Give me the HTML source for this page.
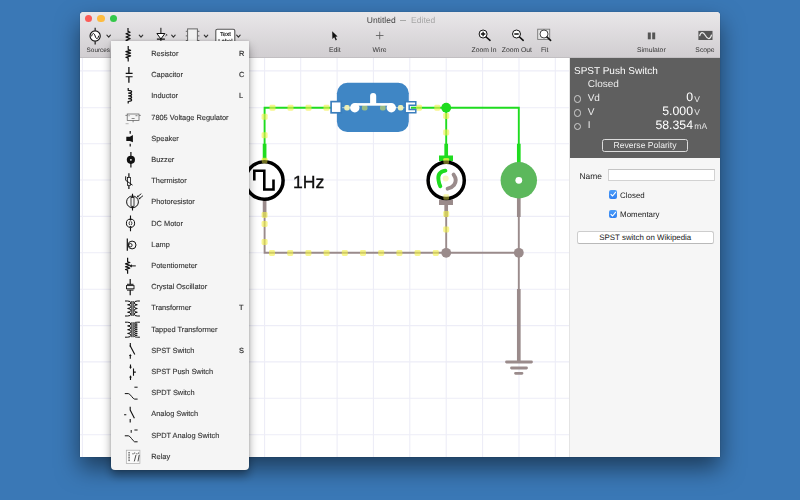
<!DOCTYPE html>
<html>
<head>
<meta charset="utf-8">
<style>
*{box-sizing:border-box;margin:0;padding:0;text-rendering:geometricPrecision}
html,body{width:800px;height:500px;overflow:hidden}
body{position:relative;background:#3a78b6;font-family:"Liberation Sans",sans-serif;color:#333}
#root{position:absolute;left:0;top:0;width:800px;height:500px;filter:blur(.3px)}
.abs{position:absolute}
#win{position:absolute;left:80px;top:12px;width:640px;height:445px;border-radius:3.5px 3.5px 0 0;background:#fff;box-shadow:0 11px 23px rgba(0,0,0,.5),0 0 1px rgba(0,0,0,.5);overflow:hidden}
#tb{position:absolute;left:0;top:0;width:640px;height:45.6px;background:linear-gradient(#e9e7e9,#d1ced1);border-bottom:1px solid #c2bfc2}
.tl{position:absolute;top:3.1px;width:7.4px;height:7.4px;border-radius:50%}
#title{position:absolute;left:286.8px;top:2.7px;font-size:8.5px;color:#444;line-height:10px;white-space:nowrap;display:flex;align-items:center}
#title b{font-weight:normal}
#title i{display:block;width:6.2px;height:.8px;background:#a8a8a8;margin:0.6px 4.7px 0 4.6px}
#title span{color:#a6a6a6}
.lbl{position:absolute;top:34.6px;font-size:6.8px;line-height:8px;color:#333;transform:translateX(-50%);white-space:nowrap}
#canvas{position:absolute;left:0;top:45.6px;width:490px;height:399.4px;background:#fff;overflow:hidden}
#side{position:absolute;left:490.3px;top:46px;width:150px;height:399px;background:#f6f6f6;box-shadow:-1px 0 0 #e4e4e4}
#dark{position:absolute;left:0;top:0;width:150px;height:100px;background:#5f5f5f;color:#fff}
#menu{position:absolute;left:111.2px;top:40.9px;width:137.6px;height:428.9px;background:#f5f5f5;border-radius:0 0 4px 4px;box-shadow:0 6px 10px rgba(0,0,0,.36),0 0 3px rgba(0,0,0,.18)}
.mi{position:absolute;left:40.1px;font-size:7.4px;line-height:10px;color:#333;white-space:nowrap;-webkit-text-stroke:.12px #333}
.mk{position:absolute;left:127.8px;font-size:7.4px;line-height:10px;color:#333;-webkit-text-stroke:.2px #333}
.rad{position:absolute;left:3.4px;width:7.6px;height:7.6px;border:1px solid #d0d0d0;border-radius:50%}
.val{position:absolute;right:27.3px;font-size:12.3px;line-height:14px;color:#fff;text-align:right;white-space:nowrap}
.unit{position:absolute;left:124px;font-size:8.5px;line-height:10px;color:#e4e4e4}
.cb{position:absolute;left:38.5px;width:8.4px;height:8.4px;border-radius:2px;background:linear-gradient(#4d9df8,#2f7ff0)}
.cb svg{position:absolute;left:0;top:0}
</style>
</head>
<body>
<div id="root">
<div id="win">
  <div id="tb">
    <div class="tl" style="left:5.1px;background:#fc5b57"></div>
    <div class="tl" style="left:17.4px;background:#fdbc40"></div>
    <div class="tl" style="left:29.7px;background:#34c84a"></div>
    <div id="title"><b>Untitled</b><i></i><span>Edited</span></div>
    <div class="lbl" style="left:18.3px;font-size:6.4px">Sources</div>
    <div class="lbl" style="left:254.8px">Edit</div>
    <div class="lbl" style="left:299.6px">Wire</div>
    <div class="lbl" style="left:404px">Zoom In</div>
    <div class="lbl" style="left:436.9px">Zoom Out</div>
    <div class="lbl" style="left:464.7px">Fit</div>
    <div class="lbl" style="left:571.3px">Simulator</div>
    <div class="lbl" style="left:625px">Scope</div>
    <svg class="abs" style="left:0;top:0" width="640" height="46" viewBox="80 12 640 46">
    <g fill="none" stroke="#333" stroke-width="1.15" stroke-linecap="round" stroke-linejoin="round"><path d="M106.90 35.2L108.7 37.1L110.40 35.2"/><path d="M139.25 35.2L141.0 37.1L142.75 35.2"/><path d="M171.65 35.2L173.4 37.1L175.15 35.2"/><path d="M204.25 35.2L206.0 37.1L207.75 35.2"/><path d="M236.65 35.2L238.4 37.1L240.15 35.2"/></g>
    <!-- sources -->
    <g fill="none" stroke="#111" stroke-width="1.15">
      <path d="M95.15 27.8V30.6M95.15 41.4V44.5"/>
      <circle cx="95.15" cy="36" r="5.1" fill="#fff"/>
      <path d="M91.6 36.3C92.4 32.6 94.2 32.6 95.15 36S97.9 39.6 98.7 35.7" stroke-width="1"/>
    </g>
    <!-- resistor -->
    <path d="M128 28V31.4L130.1 32.2L126 33.8L130.1 35.4L126 37L130.1 38.6L126 40.2L128 41V44" fill="none" stroke="#111" stroke-width="1.2" stroke-linejoin="round"/>
    <!-- diode -->
    <g stroke="#111" stroke-width="1" fill="none">
      <path d="M160.9 27.8V44"/>
      <path d="M156.9 33.5H164.9L160.9 39Z" fill="#fff"/>
      <path d="M156.9 39.2H164.9" stroke-width="1.2"/>
      <path d="M165.3 36.2L166.8 34.8M165.9 34.6H166.9V35.6" stroke-width=".6"/>
    </g>
    <!-- chip -->
    <g stroke="#666" stroke-width="1" fill="none">
      <rect x="187.6" y="28.9" width="9.8" height="15" fill="#f0f0f0"/>
      <path d="M185.8 31.3H187.6M185.8 35.9H187.6M185.8 40.5H187.6M197.4 31.3H199.4M197.4 35.9H199.4M197.4 40.5H199.4"/>
    </g>
    <!-- text label -->
    <rect x="215.8" y="29.2" width="19" height="15" rx="1.6" fill="#fff" stroke="#555" stroke-width="1.1"/>
    <text x="225.4" y="36" font-size="5.9" text-anchor="middle" fill="#111" stroke="#111" stroke-width=".15" style="font-family:'Liberation Sans',sans-serif">Text</text>
    <text x="225.4" y="42.6" font-size="5.9" text-anchor="middle" fill="#111" stroke="#111" stroke-width=".15" style="font-family:'Liberation Sans',sans-serif">Label</text>
    <!-- edit arrow -->
    <path d="M332.2 31.3L332.4 38.9L334.2 37.3L335.7 40.4L336.9 39.8L335.5 36.8L337.6 36.6Z" fill="#111"/>
    <!-- wire plus -->
    <path d="M375.9 35.5H383.5M379.7 31.7V39.3" stroke="#555" stroke-width=".8" fill="none"/>
    <!-- zoom in -->
    <g stroke="#111" fill="none">
      <circle cx="483.1" cy="34" r="4" fill="#fff" stroke-width="1"/>
      <path d="M486.1 37L490 40.3" stroke-width="1.6" stroke-linecap="round"/>
      <path d="M480.9 34H485.3M483.1 31.8V36.2" stroke-width="1.3"/>
      <circle cx="516.5" cy="34" r="4" fill="#fff" stroke-width="1"/>
      <path d="M519.5 37L523.2 40.3" stroke-width="1.6" stroke-linecap="round"/>
      <path d="M514.3 34H518.7" stroke-width="1.3"/>
    </g>
    <!-- fit -->
    <rect x="537.7" y="29.2" width="12" height="10.2" fill="#e4e4e4" stroke="#777" stroke-width=".9"/>
    <circle cx="544" cy="34" r="4" fill="#fff" stroke="#333" stroke-width=".9"/>
    <path d="M547 37L550.6 40.4" stroke="#111" stroke-width="1.6" stroke-linecap="round"/>
    <!-- pause -->
    <rect x="647.8" y="32.5" width="3" height="6.8" fill="#555"/>
    <rect x="652.2" y="32.5" width="3" height="6.8" fill="#555"/>
    <!-- scope -->
    <rect x="698.4" y="30.9" width="14.1" height="9.1" fill="#555"/>
    <path d="M699.6 36.2C700.8 31.5 703.2 31.5 705.4 35.5S710.2 40 711.6 34.6" fill="none" stroke="#e6e6e6" stroke-width="1.25"/>
    </svg>
  </div>
  <div id="canvas">
<svg class="abs" style="left:0;top:.4px" width="490" height="399" viewBox="80 58 490 399">
<path d="M82.4 58V457M118.8 58V457M155.2 58V457M191.5 58V457M227.9 58V457M264.6 58V457M300.7 58V457M337.1 58V457M373.4 58V457M409.8 58V457M446.2 58V457M482.6 58V457M519.0 58V457M555.3 58V457M80 70.9H570M80 107.7H570M80 143.7H570M80 180.0H570M80 216.4H570M80 252.8H570M80 289.2H570M80 325.6H570M80 361.9H570M80 398.3H570M80 434.7H570" stroke="#ededf7" stroke-width="1.1" fill="none"/>
<!-- green wires -->
<g fill="none" stroke="#1fdc1f" stroke-width="1.9">
<path d="M264.6 162V107.7H337"/>
<path d="M411 107.7H518.8V162"/>
<path d="M446.2 107.7V160"/>
</g>
<g fill="none" stroke="#1fdc1f" stroke-width="3.7">
<path d="M264.6 143.7V161"/>
<path d="M446.2 143.7V158"/>
<path d="M518.8 143.7V163"/>
</g>
<rect x="439" y="155.5" width="14" height="5.5" fill="#1fdc1f"/>
<circle cx="446.2" cy="107.7" r="4.9" fill="#1fdc1f"/>
<!-- gray wires -->
<g fill="none" stroke="#9a8b8b" stroke-width="1.9">
<path d="M264.6 200V252.8H518.8V198"/>
<path d="M446.2 200V252.8"/>
<path d="M518.8 252.8V362"/>
</g>
<g fill="none" stroke="#9a8b8b" stroke-width="3.7">
<path d="M264.6 200V217"/>
<path d="M446.2 203V217"/>
<path d="M518.8 197V217"/>
<path d="M518.8 289V362"/>
</g>
<rect x="439" y="199.5" width="14" height="5.5" fill="#9a8b8b"/>
<circle cx="446.2" cy="252.8" r="4.9" fill="#9a8b8b"/>
<circle cx="518.8" cy="252.8" r="4.9" fill="#9a8b8b"/>
<g fill="none" stroke="#9a8b8b" stroke-width="2.8" stroke-linecap="round">
<path d="M506.5 362H531.5M511.5 368H526.5M515.5 373.3H522"/>
</g>
<!-- current dots -->
<!-- switch -->
<rect x="336.9" y="82.8" width="71.9" height="49.2" rx="10.5" fill="#3f86c5"/>
<path d="M342 107.7H351M395 107.7H406" stroke="#fff" stroke-width="1" stroke-opacity=".6"/>
<g fill="#f2f04a" id="dots"><rect x="269.5" y="104.7" width="6" height="6" rx="1.4" fill-opacity="0.62"/><rect x="287.5" y="104.7" width="6" height="6" rx="1.4" fill-opacity="0.62"/><rect x="305.5" y="104.7" width="6" height="6" rx="1.4" fill-opacity="0.62"/><rect x="323.5" y="104.7" width="6" height="6" rx="1.4" fill-opacity="0.62"/><rect x="416.0" y="104.7" width="6" height="6" rx="1.4" fill-opacity="0.62"/><rect x="434.3" y="104.7" width="6" height="6" rx="1.4" fill-opacity="0.62"/><rect x="361.9" y="105.0" width="5.6" height="5.6" rx="2" fill-opacity="0.5"/><rect x="380.0" y="105.0" width="5.6" height="5.6" rx="2" fill-opacity="0.5"/><rect x="344.3" y="105.1" width="5.4" height="5.4" rx="2" fill-opacity="0.95" fill="#f3f3b4"/><rect x="397.9" y="105.1" width="5.4" height="5.4" rx="2" fill-opacity="0.95" fill="#f3f3b4"/><rect x="261.6" y="113.8" width="6" height="6" rx="1.4" fill-opacity="0.62"/><rect x="261.6" y="132.3" width="6" height="6" rx="1.4" fill-opacity="0.62"/><rect x="261.6" y="157.8" width="6" height="6" rx="1.4" fill-opacity="0.62"/><rect x="261.6" y="212.0" width="6" height="6" rx="1.4" fill-opacity="0.62"/><rect x="261.6" y="221.0" width="6" height="6" rx="1.4" fill-opacity="0.62"/><rect x="261.6" y="239.0" width="6" height="6" rx="1.4" fill-opacity="0.62"/><rect x="269.0" y="250.0" width="6" height="6" rx="1.4" fill-opacity="0.62"/><rect x="287.2" y="250.0" width="6" height="6" rx="1.4" fill-opacity="0.62"/><rect x="305.4" y="250.0" width="6" height="6" rx="1.4" fill-opacity="0.62"/><rect x="323.6" y="250.0" width="6" height="6" rx="1.4" fill-opacity="0.62"/><rect x="341.8" y="250.0" width="6" height="6" rx="1.4" fill-opacity="0.62"/><rect x="360.0" y="250.0" width="6" height="6" rx="1.4" fill-opacity="0.62"/><rect x="378.2" y="250.0" width="6" height="6" rx="1.4" fill-opacity="0.62"/><rect x="396.4" y="250.0" width="6" height="6" rx="1.4" fill-opacity="0.62"/><rect x="414.6" y="250.0" width="6" height="6" rx="1.4" fill-opacity="0.62"/><rect x="432.8" y="250.0" width="6" height="6" rx="1.4" fill-opacity="0.62"/><rect x="443.2" y="113.0" width="6" height="6" rx="1.4" fill-opacity="0.62"/><rect x="443.2" y="129.5" width="6" height="6" rx="1.4" fill-opacity="0.62"/><rect x="443.2" y="158.0" width="6" height="6" rx="1.4" fill-opacity="0.62"/><rect x="443.2" y="193.8" width="6" height="6" rx="1.4" fill-opacity="0.62"/><rect x="443.2" y="211.0" width="6" height="6" rx="1.4" fill-opacity="0.62"/><rect x="443.2" y="226.5" width="6" height="6" rx="1.4" fill-opacity="0.62"/></g>
<rect x="331.1" y="101.6" width="10.2" height="11.2" fill="#fff" stroke="#3b7fbd" stroke-width="1.7"/>
<path d="M415.8 101.8H405.2V112.8H415.8V109.6H409.2V105.2H415.8Z" fill="#fff" stroke="#3b7fbd" stroke-width="1.5" stroke-linejoin="miter"/>
<circle cx="354.8" cy="107.8" r="4.7" fill="#fff"/>
<circle cx="391.3" cy="107.8" r="4.7" fill="#fff"/>
<rect x="354.8" y="103.1" width="36.5" height="2.6" fill="#fff"/>
<path d="M370.1 104V96a3.05 3.05 0 0 1 6.1 0V104Z" fill="#fff"/>
<!-- source -->
<circle cx="264.3" cy="180.5" r="18.8" fill="#fff" stroke="#000" stroke-width="3.5"/>
<path d="M254.3 180.5V170.8H264.3V189.5H273.5V179.5" fill="none" stroke="#000" stroke-width="2.6"/>
<text x="293" y="187.6" font-size="17.6" fill="#111" stroke="#111" stroke-width="0.35" style="font-family:'Liberation Sans',sans-serif">1Hz</text>
<!-- motor -->
<circle cx="446.2" cy="180.4" r="18.1" fill="#fff" stroke="#000" stroke-width="3.5"/>
<path d="M445.4 170.6Q437.2 172 438.5 180Q439 184 440.3 186.3" fill="none" stroke="#1fdc1f" stroke-width="3.9" stroke-linecap="round"/>
<path d="M453.6 174.6Q457.6 180 454 185Q451.5 188 447.6 188.7" fill="none" stroke="#9a8b8b" stroke-width="3.9" stroke-linecap="round"/>
<circle cx="445.7" cy="178.6" r="3" fill="#f8f5c4"/>
<g fill="#f2f04a" fill-opacity=".45"><rect x="443.4" y="158.6" width="5.6" height="5.4" rx="1.3"/><rect x="443.4" y="194.2" width="5.6" height="5.6" rx="1.3"/><rect x="261.8" y="158.2" width="5.6" height="5.2" rx="1.3"/></g>
<!-- buzzer -->
<circle cx="518.8" cy="180.3" r="18.2" fill="#5cb85c"/>
<circle cx="518.8" cy="180.3" r="3.4" fill="#fff"/>
</svg>
</div>
  <div id="side">
    <div id="dark">
      <div class="abs" style="left:3.7px;top:7.5px;font-size:10px;line-height:12px;white-space:nowrap">SPST Push Switch</div>
      <div class="abs" style="left:17.4px;top:21.3px;font-size:10px;line-height:12px;color:#ececec">Closed</div>
      <div class="abs" style="left:17.4px;top:35px;font-size:10px;line-height:12px;color:#ececec">Vd</div>
      <div class="abs" style="left:17.4px;top:48.7px;font-size:10px;line-height:12px;color:#ececec">V</div>
      <div class="abs" style="left:17.4px;top:62.3px;font-size:10px;line-height:12px;color:#ececec">I</div>
      <div class="rad" style="top:37.4px"></div><div class="rad" style="top:51px"></div><div class="rad" style="top:64.7px"></div>
      <div class="val" style="top:32.4px">0</div><div class="val" style="top:46px">5.000</div><div class="val" style="top:59.7px">58.354</div>
      <div class="unit" style="top:35.6px">V</div><div class="unit" style="top:49.2px">V</div><div class="unit" style="top:62.9px">mA</div>
      <div class="abs" style="left:31.5px;top:81.3px;width:86.3px;height:13.2px;border:1px solid #dcdcdc;border-radius:2.5px;font-size:8.6px;line-height:11.4px;text-align:center;color:#f0f0f0;white-space:nowrap">Reverse Polarity</div>
    </div>
    <div class="abs" style="left:9.2px;top:113.3px;font-size:8.4px;line-height:10px;color:#1a1a1a">Name</div>
    <div class="abs" style="left:38px;top:110.9px;width:106.6px;height:12.6px;background:#fff;border:1px solid #d2d2d2;border-top-color:#c4c4c4"></div>
    <div class="cb" style="top:132.4px"><svg width="8.4" height="8.4" viewBox="0 0 8.4 8.4"><path d="M2 4.4L3.6 6L6.5 2.3" fill="none" stroke="#fff" stroke-width="1.1" stroke-linecap="round" stroke-linejoin="round"/></svg></div>
    <div class="abs" style="left:49.8px;top:133.4px;font-size:7.9px;line-height:10px;color:#1a1a1a">Closed</div>
    <div class="cb" style="top:151.7px"><svg width="8.4" height="8.4" viewBox="0 0 8.4 8.4"><path d="M2 4.4L3.6 6L6.5 2.3" fill="none" stroke="#fff" stroke-width="1.1" stroke-linecap="round" stroke-linejoin="round"/></svg></div>
    <div class="abs" style="left:49.8px;top:152.3px;font-size:7.9px;line-height:10px;color:#1a1a1a">Momentary</div>
    <div class="abs" style="left:6.3px;top:173.1px;width:137.4px;height:13.2px;background:#fff;border:1px solid #cdcdcd;border-bottom-color:#b9b9b9;border-radius:2.5px;font-size:7.9px;line-height:11.6px;text-align:center;color:#1a1a1a;white-space:nowrap">SPST switch on Wikipedia</div>
  </div>
</div>
<div id="menu">
<svg class="abs" style="left:0;top:0" width="138" height="429" viewBox="111 40.9 138 429"><path d="M128.2 45.8V49.4L130.6 50.2L125.9 51.6L130.6 53L125.9 54.4L130.6 55.8L125.9 57.2L128.2 58V61.4" fill="none" stroke="#111" stroke-width="1.2" stroke-linejoin="round"/><path d="M128.9 66.9V73.3M128.9 76.6V82.7" fill="none" stroke="#111" stroke-width="1.3"/><path d="M125.7 73.3H132.6M125.7 76.6H132.6" fill="none" stroke="#111" stroke-width="1.1"/><path d="M128.2 88V90.2c4.6 0.2 4.6 2.6 0 2.8c4.6 0.2 4.6 2.6 0 2.8c4.6 0.2 4.6 2.6 0 2.8c4.6 0.2 4.6 2.6 0 2.8V103.4" fill="none" stroke="#111" stroke-width="1.2"/><g fill="none" stroke="#555" stroke-width=".7"><rect x="127.2" y="113.9" width="11.8" height="6.4"/><path d="M125.4 115.3H127.2M139 115.3H140.8M133.1 120.3V122.2M131.6 118.4H134.6M135.5 115.6H137.5M128.5 115.6H129.6"/><path d="M125.6 123.6H128.6" stroke-width=".6" stroke="#888"/></g><path d="M130.2 131V133.6M130.2 143.7V146.3" fill="none" stroke="#111" stroke-width="1.2"/><path d="M126.3 136.7H129.9L132.9 135V142.2L129.9 140.8H126.3Z" fill="#111"/><path d="M130.9 152V167.4" fill="none" stroke="#111" stroke-width="1.2"/><circle cx="130.9" cy="159.7" r="4.1" fill="#111"/><circle cx="130.9" cy="159.7" r=".9" fill="#fff"/><path d="M128.9 173.2V177.4M128.9 185.2V188.9" fill="none" stroke="#111" stroke-width="1.2"/><rect x="127.4" y="177.4" width="3" height="7.8" fill="#f5f5f5" stroke="#111" stroke-width=".8"/><path d="M125.7 176.2V180.2L132.5 185" fill="none" stroke="#111" stroke-width="1"/><circle cx="132.5" cy="201.8" r="5.9" fill="none" stroke="#111" stroke-width="1"/><path d="M132.5 193.7V197.4M132.5 206.2V210.3" fill="none" stroke="#111" stroke-width="1.1"/><rect x="131" y="197.4" width="3" height="8.8" fill="#f5f5f5" stroke="#111" stroke-width=".8"/><path d="M141.3 193.6L137.6 196.6M143 195.6L139.3 198.6" fill="none" stroke="#111" stroke-width=".9"/><path d="M137.2 195.2L137.1 197.2L139 196.9ZM138.9 197.2L138.8 199.2L140.7 198.9Z" fill="#111"/><path d="M130.5 215.4V219M130.5 227.3V231.1" fill="none" stroke="#111" stroke-width="1.1"/><circle cx="130.5" cy="223.1" r="4.1" fill="none" stroke="#111" stroke-width="1"/><path d="M129 218.8H132L130.5 220.6ZM129 227.5H132L130.5 225.7Z" fill="#111"/><path d="M129.8 221.3Q128.2 223.1 129.8 224.9M131.2 221.3Q132.8 223.1 131.2 224.9" fill="none" stroke="#111" stroke-width=".8"/><path d="M127.3 238.5V250.6" fill="none" stroke="#111" stroke-width="1.2"/><circle cx="132.1" cy="244.9" r="3.9" fill="none" stroke="#111" stroke-width="1"/><circle cx="130.4" cy="245.1" r="1.7" fill="none" stroke="#111" stroke-width=".9"/><path d="M127.6 257.7V261.6L129.8 262.4L125.5 263.8L129.8 265.2L125.5 266.6L129.8 268L125.5 269.4L127.6 270.2V273.6" fill="none" stroke="#111" stroke-width="1.2" stroke-linejoin="round"/><path d="M135.8 265.8H130.5" fill="none" stroke="#111" stroke-width="1"/><path d="M129.3 265.8L131.8 264.2V267.4Z" fill="#111"/><path d="M130.2 279V284.2M130.2 290V295.1" fill="none" stroke="#111" stroke-width="1.2"/><path d="M127 284.2H133.5M127 290H133.5" fill="none" stroke="#111" stroke-width="1"/><rect x="126.5" y="285.5" width="7.5" height="3.2" fill="none" stroke="#111" stroke-width=".9"/><path d="M131.8 300.9V315.9M133.2 300.9V315.9" fill="none" stroke="#111" stroke-width=".9"/><path d="M125 300.9H127.6M125 315.9H127.6M137.3 300.9H139.9M137.3 315.9H139.9" fill="none" stroke="#111" stroke-width="1"/><path d="M127.6 300.9a3.2 1.875 0 0 1 0 3.75a3.2 1.875 0 0 1 0 3.75a3.2 1.875 0 0 1 0 3.75a3.2 1.875 0 0 1 0 3.75" fill="none" stroke="#111" stroke-width="1"/><path d="M137.3 300.9a3.0 1.875 0 0 0 0 3.75a3.0 1.875 0 0 0 0 3.75a3.0 1.875 0 0 0 0 3.75a3.0 1.875 0 0 0 0 3.75" fill="none" stroke="#111" stroke-width="1"/><path d="M131.8 322.1V337.1M133.2 322.1V337.1" fill="none" stroke="#111" stroke-width=".9"/><path d="M125 322.1H127.6M125 337.1H127.6M137.3 322.1H139.9M137.3 337.1H139.9" fill="none" stroke="#111" stroke-width="1"/><path d="M127.6 322.1a3.2 1.875 0 0 1 0 3.75a3.2 1.875 0 0 1 0 3.75a3.2 1.875 0 0 1 0 3.75a3.2 1.875 0 0 1 0 3.75" fill="none" stroke="#111" stroke-width="1"/><path d="M137.3 322.1a3.0 0.9375 0 0 0 0 1.875a3.0 0.9375 0 0 0 0 1.875a3.0 0.9375 0 0 0 0 1.875a3.0 0.9375 0 0 0 0 1.875a3.0 0.9375 0 0 0 0 1.875a3.0 0.9375 0 0 0 0 1.875a3.0 0.9375 0 0 0 0 1.875a3.0 0.9375 0 0 0 0 1.875" fill="none" stroke="#111" stroke-width="0.9"/><path d="M130.3 343V346L134.8 354.3M130.3 355V358.7" fill="none" stroke="#111" stroke-width="1.1"/><path d="M129 356L130.3 353.8L131.6 356Z" fill="#111"/><circle cx="130.3" cy="346" r=".8" fill="#111"/><path d="M130.5 364.5V367.5M130.5 376.4V379.8" fill="none" stroke="#111" stroke-width="1.1"/><path d="M129.2 366.6L130.5 368.8L131.8 366.6ZM129.2 377.3L130.5 375.1L131.8 377.3Z" fill="#111"/><path d="M133.5 368.3V375.6M133.5 372H135.8" fill="none" stroke="#111" stroke-width="1.1"/><path d="M124.8 393.5H128.4Q129.6 393.6 131.5 396.2T134.6 399H137.6M134.4 387.1H137.6" fill="none" stroke="#111" stroke-width="1"/><path d="M130.2 406.7V409.9L134.4 418.2M130.2 418.8V422.4M124.1 414.7H126.3" fill="none" stroke="#111" stroke-width="1.1"/><path d="M124.8 435.7H128.4Q129.6 435.8 131.5 438.4T134.6 441.7H137.6M134.4 429.9H137.6M131.2 429.9V432.7" fill="none" stroke="#111" stroke-width="1"/><rect x="126.3" y="450.1" width="13.6" height="13.3" fill="#fafafa" stroke="#aaa" stroke-width=".7"/><path d="M128.3 452.5h1.6M128.3 454.1h1.6M128.3 455.7h1.6M128.3 457.3h1.6M128.3 458.9h1.6M128.3 460.5h1.6" fill="none" stroke="#444" stroke-width=".8"/><path d="M134.3 461.3L136 454.8M138 461.3L139.2 454.8M133 453V454.3M134.7 452.4V453.6M136.9 453V454.3M138.6 452.4V453.6" fill="none" stroke="#222" stroke-width=".8"/></svg>
<div class="mi" style="top:8.2px">Resistor</div>
<div class="mk" style="top:8.2px">R</div>
<div class="mi" style="top:29.4px">Capacitor</div>
<div class="mk" style="top:29.4px">C</div>
<div class="mi" style="top:50.6px">Inductor</div>
<div class="mk" style="top:50.6px">L</div>
<div class="mi" style="top:71.8px">7805 Voltage Regulator</div>
<div class="mi" style="top:93.0px">Speaker</div>
<div class="mi" style="top:114.2px">Buzzer</div>
<div class="mi" style="top:135.4px">Thermistor</div>
<div class="mi" style="top:156.6px">Photoresistor</div>
<div class="mi" style="top:177.8px">DC Motor</div>
<div class="mi" style="top:199.0px">Lamp</div>
<div class="mi" style="top:220.2px">Potentiometer</div>
<div class="mi" style="top:241.4px">Crystal Oscillator</div>
<div class="mi" style="top:262.6px">Transformer</div>
<div class="mk" style="top:262.6px">T</div>
<div class="mi" style="top:283.8px">Tapped Transformer</div>
<div class="mi" style="top:305.0px">SPST Switch</div>
<div class="mk" style="top:305.0px">S</div>
<div class="mi" style="top:326.2px">SPST Push Switch</div>
<div class="mi" style="top:347.4px">SPDT Switch</div>
<div class="mi" style="top:368.6px">Analog Switch</div>
<div class="mi" style="top:389.8px">SPDT Analog Switch</div>
<div class="mi" style="top:411.0px">Relay</div>
</div>
</div>
</body>
</html>
